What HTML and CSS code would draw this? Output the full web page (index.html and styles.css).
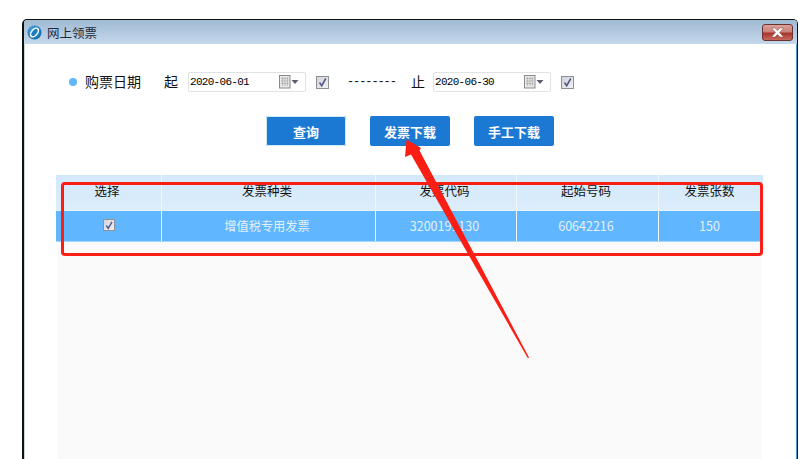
FILE: index.html
```html
<!DOCTYPE html>
<html lang="zh-CN">
<head>
<meta charset="utf-8">
<title>网上领票</title>
<link rel="stylesheet" href="styles.css">
</head>
<body>
<div class="window">
  <div class="titlebar">
    <svg class="logo" width="15" height="15" viewBox="0 0 15 15">
      <defs>
        <radialGradient id="lg" cx="40%" cy="35%" r="70%"><stop offset="0" stop-color="#4fb0e8"/><stop offset="1" stop-color="#0b66aa"/></radialGradient>
      </defs>
      <circle cx="7.500" cy="7.500" r="7" fill="url(#lg)"/>
      <ellipse cx="7.500" cy="7.500" rx="5" ry="2.900" transform="rotate(-50 7.500 7.500)" fill="#1d7cc0" stroke="#fff" stroke-width="1.500"/>
    </svg>
    <span class="title">网上领票</span>
    <span class="close">
      <svg width="17" height="11" viewBox="0 0 17 11"><path d="M2.500 1h3.500l2.500 2.600L11 1h3.500l-4 4.500 4 4.500H11L8.500 7.400 6 10H2.500l4-4.500z" fill="#fff" stroke="#8a4a48" stroke-width=".5"/></svg>
    </span>
  </div>
  <div class="content">
    <div class="filter">
      <span class="dot"></span>
      <span class="label">购票日期</span>
      <span class="mark mark-start">起</span>
      <span class="datebox">
        <span class="date">2020-06-01</span>
        <svg class="cal" width="20" height="14" viewBox="0 0 20 14"><rect x=".5" y=".5" width="10.500" height="12.500" fill="#e8e8e8" stroke="#8a8a8a"/><path d="M2 3.500h7.500M2 6h7.500M2 8.500h7.500M3.500 2v9M6 2v9M8.500 2v9" stroke="#b0b0b0" stroke-width=".8"/><path d="M12.500 5h7l-3.500 4z" fill="#5a6070"/></svg>
      </span>
      <span class="check check-a"><svg width="11" height="11" viewBox="0 0 11 11"><path d="M2.500 5.500l2.200 3.200L8.800 1.500" fill="none" stroke="#545a8c" stroke-width="1.600"/></svg></span>
      <span class="dashes">--------</span>
      <span class="mark mark-end">止</span>
      <span class="datebox datebox-end">
        <span class="date">2020-06-30</span>
        <svg class="cal" width="20" height="14" viewBox="0 0 20 14"><rect x=".5" y=".5" width="10.500" height="12.500" fill="#e8e8e8" stroke="#8a8a8a"/><path d="M2 3.500h7.500M2 6h7.500M2 8.500h7.500M3.500 2v9M6 2v9M8.500 2v9" stroke="#b0b0b0" stroke-width=".8"/><path d="M12.500 5h7l-3.500 4z" fill="#5a6070"/></svg>
      </span>
      <span class="check check-a"><svg width="11" height="11" viewBox="0 0 11 11"><path d="M2.500 5.500l2.200 3.200L8.800 1.500" fill="none" stroke="#545a8c" stroke-width="1.600"/></svg></span>
    </div>
    <div class="actions">
      <button class="btn btn-focus">查询</button>
      <button class="btn">发票下载</button>
      <button class="btn">手工下载</button>
    </div>
    <div class="grid">
      <div class="row head">
        <div class="cell">选择</div>
        <div class="cell">发票种类</div>
        <div class="cell">发票代码</div>
        <div class="cell">起始号码</div>
        <div class="cell">发票张数</div>
      </div>
      <div class="row selected">
        <div class="cell"><span class="check check-row"><svg width="11" height="11" viewBox="0 0 11 11"><path d="M2.500 5.500l2.200 3.200L8.800 1.500" fill="none" stroke="#545a8c" stroke-width="1.600"/></svg></span></div>
        <div class="cell cell-kind">增值税专用发票</div>
        <div class="cell">3200191130</div>
        <div class="cell">60642216</div>
        <div class="cell">150</div>
      </div>
    </div>
  </div>
</div>
<div class="redbox"></div>
<svg class="arrow" width="799" height="459" viewBox="0 0 799 459">
  <path d="M406.500 139.500L421 148 419.500 150.500 529 357.500 528 358.500 411 154.500 405 157z" fill="#fb1e14"/>
</svg>
</body>
</html>
```
FILE: styles.css
```css
html, body {
  margin: 0;
  height: 459px;
  overflow: hidden;
  background: #fff;
}
body {
  padding: 19px 1px 0 22px;
  box-sizing: border-box;
  font-family: "Noto Sans CJK SC", "Liberation Sans", sans-serif;
  color: #111;
}
.window {
  height: 100%;
  box-sizing: border-box;
  border: 1px solid #111;
  border-bottom: 0;
  border-left-width: 2px;
  border-radius: 5px 5px 0 0;
  display: flex;
  flex-direction: column;
  box-shadow: inset 1px 0 0 #c6d8d8, inset -1px 0 0 #3f9fc6;
  padding: 0 1px;
}
.titlebar {
  height: 24px;
  flex: none;
  display: flex;
  align-items: center;
  margin: 0 -1px;
  padding: 0 4px 0 3px;
  background: linear-gradient(#9fbad3, #c5d8ec);
  border-radius: 3px 3px 0 0;
}
.logo { flex: none; }
.title {
  margin-left: 5px;
  font-size: 12.500px;
  color: #1c2a38;
}
.close {
  margin-left: auto;
  margin-top: 1px;
  width: 29px;
  height: 15px;
  display: flex;
  align-items: center;
  justify-content: center;
  border: 1px solid #6c3232;
  border-radius: 3px;
  background: linear-gradient(#dca09a 0, #c9837c 45%, #a8352c 55%, #c96a5e 100%);
}
.content {
  flex: 1;
  min-height: 0;
  display: flex;
  flex-direction: column;
  background: #fff;
}
.filter {
  display: flex;
  align-items: center;
  height: 20px;
  margin-top: 28px;
  padding-left: 44px;
  font-size: 14px;
}
.dot {
  width: 8px;
  height: 8px;
  border-radius: 50%;
  background: #61b7fb;
}
.label { margin-left: 8px; font-size: 14px; padding-bottom: 2px; }
.mark { font-size: 14px; padding-bottom: 2px; }
.mark-start { margin-left: 23px; }
.mark-end { margin-left: 15px; }
.datebox {
  width: 118px;
  height: 20px;
  box-sizing: border-box;
  margin-left: 10px;
  display: flex;
  align-items: center;
  padding-left: 1px;
  border: 1px solid #dfe3e6;
  border-radius: 2px;
  background: #fff;
}
.datebox-end { margin-left: 8px; }
.date {
  font-family: "Liberation Mono", monospace;
  font-size: 11px;
  letter-spacing: -0.7px;
  color: #000;
}
.cal { margin-left: auto; margin-right: 6px; }
.check {
  width: 13px;
  height: 13px;
  box-sizing: border-box;
  display: inline-flex;
  align-items: center;
  justify-content: center;
  border: 1px solid #8d9094;
  background: linear-gradient(135deg, #d2d4dc, #f2f2f4);
}
.check-a { margin-left: 10px; }
.dashes {
  margin-left: 18px;
  width: 49px;
  font-family: "Liberation Mono", monospace;
  font-size: 12px;
  letter-spacing: -1.100px;
}
.actions {
  flex: none;
  display: flex;
  gap: 24px;
  margin-top: 24px;
  padding-left: 241px;
}
.btn {
  width: 80px;
  height: 30px;
  padding: 0;
  border: 0;
  border-radius: 2px;
  background: #1b79d4;
  color: #fff;
  font-family: inherit;
  font-size: 13px;
  font-weight: 700;
}
.btn-focus {
  outline: 1px solid #cfeaf7;
  outline-offset: -1px;
}
.grid {
  flex: 1;
  min-height: 0;
  margin: 29px 34px 0 33px;
  background: #fafafa;
}
.row {
  display: grid;
  grid-template-columns: 106px 214px 141px 142px 104px;
  margin: 0 -1px 0 -2px;
}
.cell {
  display: flex;
  align-items: center;
  justify-content: center;
  font-size: 12.500px;
  border-right: 1px solid #f0f8fe;
}
.cell:last-child { border-right: 0; }
.head { background: linear-gradient(#d3e9fb, #dcedfb); }
.head .cell { height: 35px; padding: 0 3px 5px 0; box-sizing: border-box; }
.selected {
  background: #61b7ff;
  border-top: 1px solid #e8f4fd;
  border-bottom: 1px solid #a6d6fb;
}
.selected .cell { height: 30px; padding: 0 3px 2px 0; box-sizing: border-box; color: #e3f1fd; }
.selected .cell-kind { font-size: 12.200px; padding-bottom: 0; }
.selected .cell:first-child { padding-right: 0; }
.check-row { width: 12px; height: 12px; }
.redbox {
  position: absolute;
  left: 61px;
  top: 182px;
  width: 702px;
  height: 74px;
  box-sizing: border-box;
  border: 3px solid #fb1e14;
  border-radius: 4px;
}
.arrow {
  position: absolute;
  left: 0;
  top: 0;
}
```
